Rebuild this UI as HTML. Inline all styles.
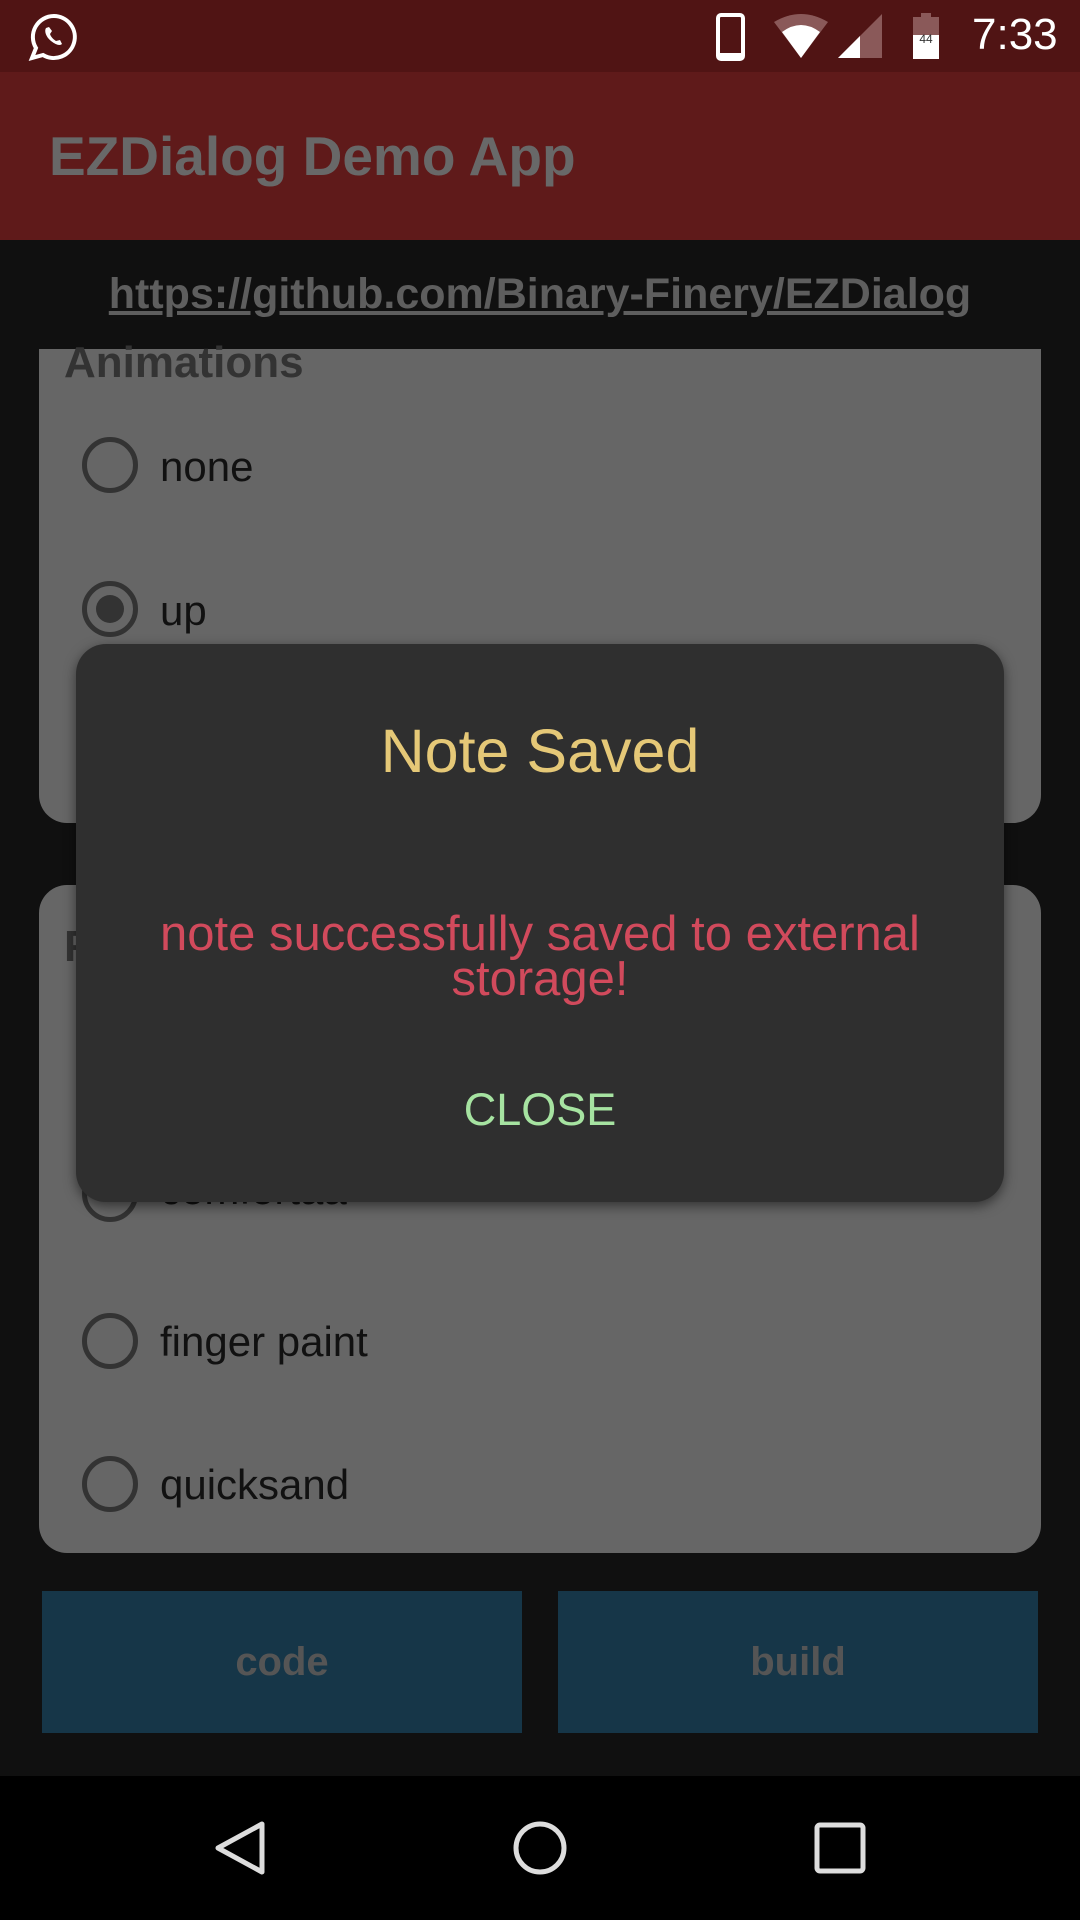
<!DOCTYPE html>
<html><head><meta charset="utf-8"><style>
*{margin:0;padding:0;box-sizing:border-box}
body{width:1080px;height:1920px;background:#101010;position:relative;overflow:hidden;font-family:"Liberation Sans",sans-serif}
.abs{position:absolute}
.status{left:0;top:0;width:1080px;height:72px;background:#501414}
.bar{left:0;top:72px;width:1080px;height:168px;background:#5f1a1a}
.title{left:49px;top:124px;font-size:55px;font-weight:bold;color:#686868}
.url{left:0;width:1080px;top:270px;text-align:center;font-size:43px;font-weight:bold;color:#5e5e5e;text-decoration:underline}
.card{background:#666;border-radius:28px}
.radio{width:56px;height:56px;border-radius:50%;border:5px solid #333}
.lbl{font-size:42px;color:#111}
.btn{background:#163648;color:#555;font-weight:bold;font-size:40px;display:flex;align-items:center;justify-content:center}
.dlg{left:76px;top:644px;width:928px;height:558px;background:#2f2f2f;border-radius:30px;box-shadow:0 4px 12px rgba(0,0,0,.5);text-align:center}
.nav{left:0;top:1776px;width:1080px;height:144px;background:#000}
</style></head><body>
<div class="abs status"></div>
<svg class="abs" style="left:28px;top:12px" width="52" height="50" viewBox="0 0 52 50"><path d="M26 4a21 21 0 0 0-18 32l-4 10 11-3A21 21 0 1 0 26 4z" fill="none" stroke="#fff" stroke-width="4"/><path d="M18 16c-2 3 0 9 5 13s9 5 11 3l-2-4-4 1c-3-2-5-4-6-7l2-3-3-4z" fill="#fff"/></svg>
<svg class="abs" style="left:716px;top:13px" width="30" height="48"><rect x="2" y="2" width="25" height="44" rx="3" fill="none" stroke="#fff" stroke-width="4"/><rect x="4" y="40" width="21" height="5" fill="#fff"/></svg>
<svg class="abs" style="left:772px;top:14px" width="58" height="46" viewBox="0 0 58 46"><path d="M2 8Q29-8 56 8L29 44z" fill="#8a5959"/><path d="M10 18Q29 4 48 18L29 44z" fill="#fff"/></svg>
<svg class="abs" style="left:838px;top:14px" width="44" height="44"><path d="M0 44L44 0V44z" fill="#8a5959"/><path d="M0 44L22 22V44z" fill="#fff"/></svg>
<svg class="abs" style="left:912px;top:13px" width="28" height="46"><rect x="9" y="0" width="10" height="4" fill="#8a5959"/><rect x="1" y="4" width="26" height="18" fill="#8a5959"/><rect x="1" y="22" width="26" height="24" fill="#fff"/><text x="14" y="30" font-size="12" text-anchor="middle" fill="#333" font-family="Liberation Sans">44</text></svg>
<div class="abs" style="left:972px;top:10px;font-size:44px;color:#fff">7:33</div>
<div class="abs bar"></div>
<div class="abs title">EZDialog Demo App</div>
<div class="abs url">https://github.com/Binary-Finery/EZDialog</div>

<div class="abs card" style="left:39px;top:349px;width:1002px;height:474px;border-radius:0 0 28px 28px"></div>
<div class="abs" style="left:64px;top:338px;font-size:44px;font-weight:bold;color:#333">Animations</div>
<div class="abs radio" style="left:82px;top:437px"></div>
<div class="abs lbl" style="left:160px;top:443px">none</div>
<div class="abs radio" style="left:82px;top:581px"></div>
<div class="abs" style="left:96px;top:595px;width:28px;height:28px;border-radius:50%;background:#333"></div>
<div class="abs lbl" style="left:160px;top:587px">up</div>

<div class="abs card" style="left:39px;top:885px;width:1002px;height:668px"></div>
<div class="abs" style="left:64px;top:922px;font-size:44px;font-weight:bold;color:#333">F</div>
<div class="abs radio" style="left:82px;top:1166px"></div>
<div class="abs lbl" style="left:160px;top:1166px">comfortaa</div>
<div class="abs radio" style="left:82px;top:1313px"></div>
<div class="abs lbl" style="left:160px;top:1318px">finger paint</div>
<div class="abs radio" style="left:82px;top:1456px"></div>
<div class="abs lbl" style="left:160px;top:1461px">quicksand</div>

<div class="abs btn" style="left:42px;top:1591px;width:480px;height:142px">code</div>
<div class="abs btn" style="left:558px;top:1591px;width:480px;height:142px">build</div>

<div class="abs dlg">
<div style="position:absolute;left:0;right:0;top:72px;font-size:61px;color:#e5c877">Note Saved</div>
<div style="position:absolute;left:10px;right:10px;top:268px;font-size:49px;line-height:45px;color:#d14a5c">note successfully saved to external<br>storage!</div>
<div style="position:absolute;left:0;right:0;top:440px;font-size:45px;color:#a6e3a1">CLOSE</div>
</div>

<div class="abs nav"></div>
<svg class="abs" style="left:210px;top:1818px" width="60" height="60"><path d="M52 6V54L8 30z" fill="none" stroke="#ddd" stroke-width="5" stroke-linejoin="round"/></svg>
<svg class="abs" style="left:510px;top:1818px" width="60" height="60"><circle cx="30" cy="30" r="24" fill="none" stroke="#ddd" stroke-width="5"/></svg>
<svg class="abs" style="left:812px;top:1820px" width="56" height="56"><rect x="5" y="5" width="46" height="46" rx="3" fill="none" stroke="#ddd" stroke-width="5"/></svg>
</body></html>
